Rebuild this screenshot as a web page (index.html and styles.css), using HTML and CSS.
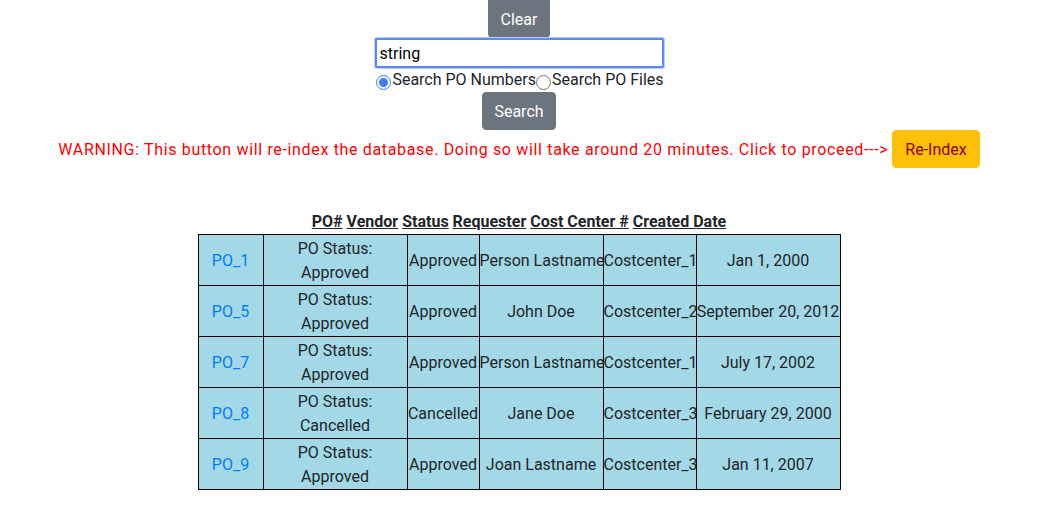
FILE: index.html
```html
<!DOCTYPE html>
<html>
<head>
<meta charset="utf-8">
<link rel="stylesheet" href="styles.css">
</head>
<body>
<div class="page">
  <div class="top">
    <button class="btn btn-clear">Clear</button>
    <input class="search-input" type="text" value="string">
    <div class="radios">
      <label class="radio"><input type="radio" name="mode" checked>Search PO Numbers</label>
      <label class="radio"><input type="radio" name="mode">Search PO Files</label>
    </div>
    <button class="btn btn-search">Search</button>
  </div>
  <div class="warning-row">
    <span class="warning">WARNING: This button will re-index the database. Doing so will take around 20 minutes. Click to proceed---&gt;</span>
    <button class="btn btn-reindex">Re-Index</button>
  </div>
  <div class="results">
    <div class="headers">
      <a>PO#</a> <a>Vendor</a> <a>Status</a> <a>Requester</a> <a>Cost Center #</a> <a>Created Date</a>
    </div>
    <table class="po-table">
      <tbody>
        <tr>
          <td class="c1"><a href="#">PO_1</a></td>
          <td class="c2">PO Status:<br>Approved</td>
          <td class="c3">Approved</td>
          <td class="c4">Person Lastname</td>
          <td class="c5">Costcenter_1</td>
          <td class="c6">Jan 1, 2000</td>
        </tr>
        <tr>
          <td class="c1"><a href="#">PO_5</a></td>
          <td class="c2">PO Status:<br>Approved</td>
          <td class="c3">Approved</td>
          <td class="c4">John Doe</td>
          <td class="c5">Costcenter_2</td>
          <td class="c6">September 20, 2012</td>
        </tr>
        <tr>
          <td class="c1"><a href="#">PO_7</a></td>
          <td class="c2">PO Status:<br>Approved</td>
          <td class="c3">Approved</td>
          <td class="c4">Person Lastname</td>
          <td class="c5">Costcenter_1</td>
          <td class="c6">July 17, 2002</td>
        </tr>
        <tr>
          <td class="c1"><a href="#">PO_8</a></td>
          <td class="c2">PO Status:<br>Cancelled</td>
          <td class="c3">Cancelled</td>
          <td class="c4">Jane Doe</td>
          <td class="c5">Costcenter_3</td>
          <td class="c6">February 29, 2000</td>
        </tr>
        <tr>
          <td class="c1"><a href="#">PO_9</a></td>
          <td class="c2">PO Status:<br>Approved</td>
          <td class="c3">Approved</td>
          <td class="c4">Joan Lastname</td>
          <td class="c5">Costcenter_3</td>
          <td class="c6">Jan 11, 2007</td>
        </tr>
      </tbody>
    </table>
  </div>
</div>
</body>
</html>
```
FILE: styles.css
```css
* { box-sizing: border-box; }
html, body { margin: 0; padding: 0; background: #fff; }
body {
  font-family: Roboto, "Liberation Sans", sans-serif;
  font-size: 16px;
  line-height: 24px;
  color: #212529;
}
.page {
  width: 1038px;
  text-align: center;
}
.top {
  display: flex;
  flex-direction: column;
  align-items: center;
}
.btn {
  font-family: inherit;
  font-size: 16px;
  line-height: 24px;
  height: 38px;
  padding: 7px 12px 5px;
  border: 1px solid transparent;
  border-radius: 4px;
  cursor: pointer;
}
.btn-clear {
  background: #6c757d;
  border-color: #6c757d;
  color: #fff;
  border-radius: 0 0 4px 4px;
}
.search-input {
  width: 289px;
  height: 30px;
  border: 2px solid #5a8af2;
  border-radius: 2px;
  box-shadow: 0 0 0 1px #b9cdfa;
  font-family: inherit;
  font-size: 16px;
  color: #000;
  padding: 1px 3px 0;
  outline: none;
}
.radios {
  display: flex;
  height: 24px;
  align-items: center;
  padding-left: 2px;
}
.radio {
  display: flex;
  align-items: center;
}
.radio input {
  margin: 4px 1px 0 0;
  width: 15px;
  height: 15px;
  accent-color: #3b7bf6;
}
.btn-search {
  background: #6c757d;
  border-color: #6c757d;
  color: #fff;
  padding-left: 11px;
  padding-right: 11px;
}
.warning-row {
  display: flex;
  justify-content: center;
  align-items: center;
}
.warning {
  color: #ff0000;
  letter-spacing: 0.66px;
  margin-right: 4px;
  padding-top: 1px;
}
.btn-reindex {
  background: #ffc107;
  border-color: #ffc107;
  color: #8b0000;
}
.results {
  margin-top: 41px;
  display: flex;
  flex-direction: column;
  align-items: center;
}
.headers {
  font-weight: 700;
  line-height: 24px;
  padding-top: 1px;
  height: 25px;
}
.headers a {
  text-decoration: underline;
  color: #212529;
}
.po-table {
  border-collapse: collapse;
  table-layout: fixed;
  width: 642px;
}
.po-table td {
  border: 1px solid #000;
  background: #a3d9e6;
  padding: 2px 0 0;
  text-align: center;
  vertical-align: middle;
  height: 51px;
  white-space: nowrap;
}
.po-table a { color: #007bff; text-decoration: none; }
.c1 { width: 65px; }
.c2 { width: 144px; }
.c3 { width: 72px; }
.c4 { width: 124px; }
.c5 { width: 93px; }
.c6 { width: 144px; }
```
